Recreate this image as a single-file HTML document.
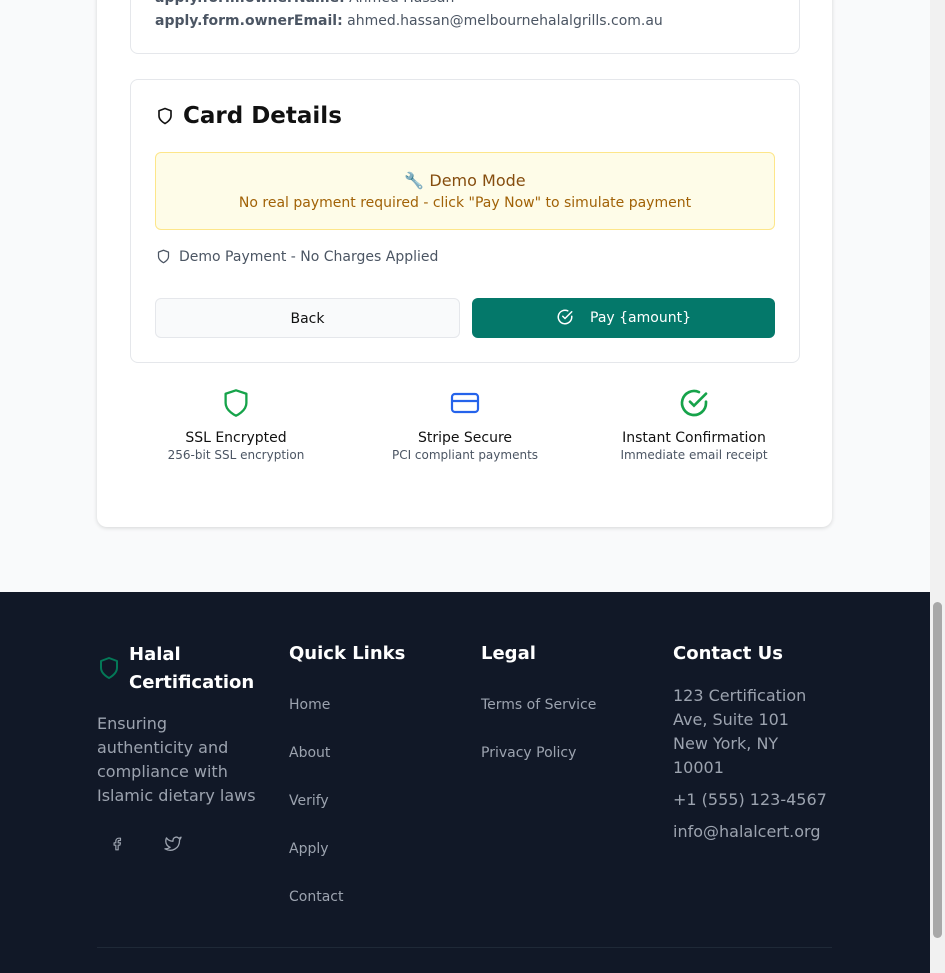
<!DOCTYPE html>
<html><head><style>
*{margin:0;padding:0;box-sizing:border-box}
body{width:945px;height:973px;overflow:hidden;background:#f9fafb;font-family:"DejaVu Sans","Liberation Sans",sans-serif;position:relative}
.a{position:absolute}
.sb{position:absolute;right:0;top:0;width:15px;height:973px;background:#f1f1f1}
.sb i{position:absolute;left:3px;top:602px;width:9px;height:336px;background:#a8a8a8;border-radius:5px}
.ft a{display:block;color:#9ca3af;font-size:14px;text-decoration:none}
</style></head><body>
<div class="a" style="left:97px;top:-20px;width:735px;height:547px;background:#fff;border-radius:10px;box-shadow:0 1px 4px rgba(0,0,0,.15)"></div>
<div class="a" style="left:130px;top:-20px;width:670px;height:74px;border:1px solid #e5e7eb;border-radius:8px;background:#fff"></div>
<div class="a" style="left:155px;top:-10px;font-size:14px;color:#4b5563;white-space:nowrap"><b style="color:#4b5563">apply.form.ownerName:</b> Ahmed Hassan</div>
<div class="a" style="left:155px;top:13px;font-size:14px;color:#4b5563;white-space:nowrap"><b>apply.form.ownerEmail:</b> ahmed.hassan@melbournehalalgrills.com.au</div>

<div class="a" style="left:130px;top:79px;width:670px;height:284px;border:1px solid #e5e7eb;border-radius:8px;background:#fff"></div>
<svg class="a" style="left:156px;top:107px" width="18" height="18" viewBox="0 0 24 24" fill="none" stroke="#111" stroke-width="2.2" stroke-linejoin="round"><path d="M12 22s8-4 8-10V5l-8-3-8 3v7c0 6 8 10 8 10z"/></svg>
<div class="a" style="left:183px;top:103px;font-size:23px;font-weight:bold;color:#111">Card Details</div>
<div class="a" style="left:155px;top:152px;width:620px;height:78px;background:#fefce8;border:1px solid #fde68a;border-radius:6px;text-align:center">
<div style="margin-top:18px;font-size:16px;color:#854d0e">🔧 Demo Mode</div>
<div style="margin-top:5px;font-size:14px;color:#a16207">No real payment required - click "Pay Now" to simulate payment</div></div>
<svg class="a" style="left:156px;top:249px" width="15" height="15" viewBox="0 0 24 24" fill="none" stroke="#4b5563" stroke-width="2" stroke-linejoin="round"><path d="M12 22s8-4 8-10V5l-8-3-8 3v7c0 6 8 10 8 10z"/></svg>
<div class="a" style="left:179px;top:249px;font-size:14px;color:#4b5563">Demo Payment - No Charges Applied</div>
<div class="a" style="left:155px;top:298px;width:305px;height:40px;background:#f9fafb;border:1px solid #e5e7eb;border-radius:6px;text-align:center;line-height:40px;font-size:14px;color:#111">Back</div>
<div class="a" style="left:472px;top:298px;width:303px;height:40px;background:#04786a;border-radius:6px;text-align:center;line-height:41px;font-size:14px;color:#fff"><svg style="vertical-align:-4px;margin-right:16px" width="18" height="18" viewBox="0 0 24 24" fill="none" stroke="#fff" stroke-width="2" stroke-linecap="round"><path d="M21 11v1a9 9 0 1 1-5.3-8.2"/><path d="M9 11l3 3 9-9"/></svg>Pay {amount}</div>

<svg class="a" style="left:222px;top:388px" width="28" height="30" viewBox="0 0 24 26" fill="none" stroke="#16a34a" stroke-width="2" stroke-linejoin="round"><path d="M12 24s9-4 9-11V5l-9-3-9 3v8c0 7 9 11 9 11z"/></svg>
<svg class="a" style="left:450px;top:390px" width="30" height="26" viewBox="0 0 30 26" fill="none" stroke="#2563eb" stroke-width="2.2"><rect x="2" y="4" width="26" height="18" rx="3"/><path d="M2 11h26"/></svg>
<svg class="a" style="left:678px;top:387px" width="32" height="32" viewBox="0 0 24 24" fill="none" stroke="#16a34a" stroke-width="2" stroke-linecap="round"><path d="M21 11v1a9 9 0 1 1-5.3-8.2"/><path d="M9 11l3 3 9-9"/></svg>
<div class="a" style="left:136px;top:430px;width:200px;text-align:center"><div style="font-size:14px;color:#111">SSL Encrypted</div><div style="font-size:12px;color:#4b5563;margin-top:2px">256-bit SSL encryption</div></div>
<div class="a" style="left:365px;top:430px;width:200px;text-align:center"><div style="font-size:14px;color:#111">Stripe Secure</div><div style="font-size:12px;color:#4b5563;margin-top:2px">PCI compliant payments</div></div>
<div class="a" style="left:594px;top:430px;width:200px;text-align:center"><div style="font-size:14px;color:#111">Instant Confirmation</div><div style="font-size:12px;color:#4b5563;margin-top:2px">Immediate email receipt</div></div>

<div class="a ft" style="left:0;top:592px;width:930px;height:381px;background:#111827">
<svg class="a" style="left:99px;top:64px" width="20" height="24" viewBox="0 0 20 24" fill="none" stroke="#047857" stroke-width="2" stroke-linejoin="round"><path d="M10 22s8-4 8-10V5l-8-3-8 3v7c0 6 8 10 8 10z"/></svg>
<div class="a" style="left:129px;top:49px;font-size:18px;font-weight:bold;color:#fff;line-height:28px">Halal<br>Certification</div>
<div class="a" style="left:97px;top:120px;font-size:16px;color:#9ca3af;line-height:24px;width:170px">Ensuring authenticity and compliance with Islamic dietary laws</div>
<svg class="a" style="left:110px;top:244px" width="14" height="16" viewBox="0 0 24 24" fill="none" stroke="#9ca3af" stroke-width="2" stroke-linejoin="round"><path d="M18 2h-3a5 5 0 0 0-5 5v3H7v4h3v8h4v-8h3l1-4h-4V7a1 1 0 0 1 1-1h3z"/></svg>
<svg class="a" style="left:164px;top:243px" width="18" height="16" viewBox="0 0 24 22" fill="none" stroke="#9ca3af" stroke-width="1.8" stroke-linejoin="round"><path d="M23 3a10.9 10.9 0 0 1-3.1 1.5 4.5 4.5 0 0 0-7.9 3v1A10.7 10.7 0 0 1 3 4s-4 9 5 13a11.6 11.6 0 0 1-7 2c9 5 20 0 20-11.5 0-.3 0-.6-.1-.8A7.7 7.7 0 0 0 23 3z"/></svg>
<div class="a" style="left:289px;top:51px;font-size:18px;font-weight:bold;color:#fff">Quick Links</div>
<div class="a" style="left:289px;top:89px;line-height:48px"><a>Home</a><a>About</a><a>Verify</a><a>Apply</a><a>Contact</a></div>
<div class="a" style="left:481px;top:51px;font-size:18px;font-weight:bold;color:#fff">Legal</div>
<div class="a" style="left:481px;top:89px;line-height:48px"><a>Terms of Service</a><a>Privacy Policy</a></div>
<div class="a" style="left:673px;top:51px;font-size:18px;font-weight:bold;color:#fff">Contact Us</div>
<div class="a" style="left:673px;top:92px;font-size:16px;color:#9ca3af;line-height:24px;width:145px">123 Certification Ave, Suite 101 New York, NY 10001</div>
<div class="a" style="left:673px;top:198px;font-size:16px;color:#9ca3af">+1 (555) 123-4567</div>
<div class="a" style="left:673px;top:230px;font-size:16px;color:#9ca3af">info@halalcert.org</div>
<div class="a" style="left:97px;top:355px;width:735px;height:1px;background:#1f2937"></div>
</div>
<div class="sb"><i></i></div>
</body></html>
